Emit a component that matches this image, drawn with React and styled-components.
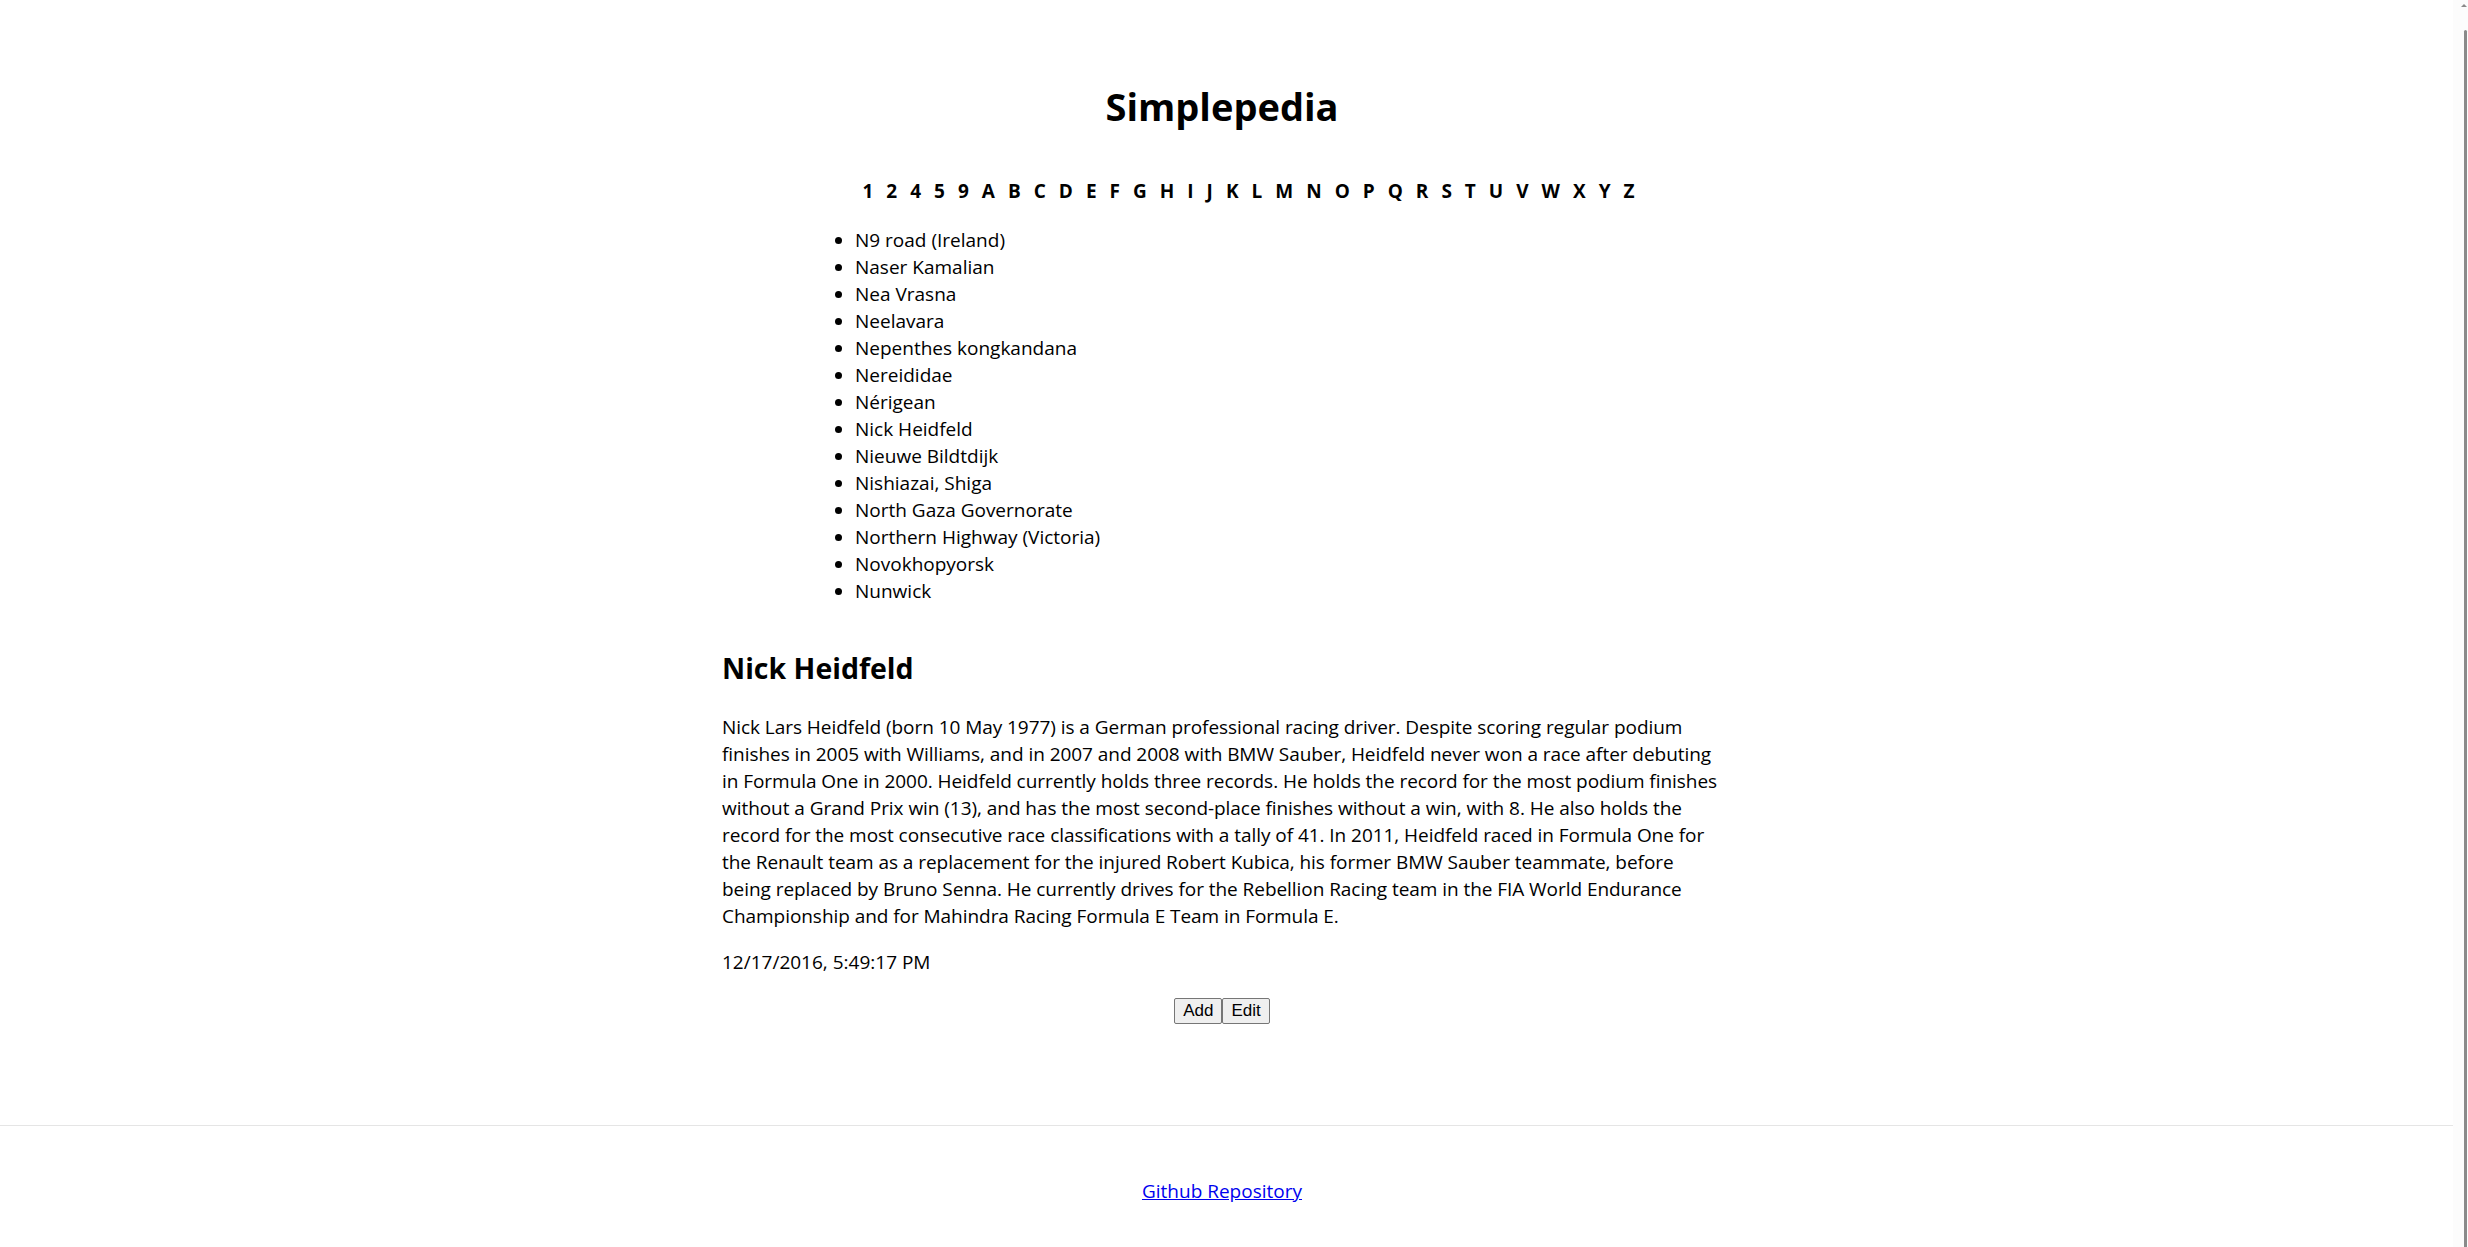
import React from 'react'
import styled, { createGlobalStyle } from 'styled-components'

const GlobalStyle = createGlobalStyle`
  body {
    margin: 0;
    font-family: 'Open Sans', 'Noto Sans', sans-serif;
    font-size: 19px;
    color: #000;
    background: #fff;
  }
`

const letters = '1 2 4 5 9 A B C D E F G H I J K L M N O P Q R S T U V W X Y Z'.split(' ')

const titles = [
  'N9 road (Ireland)',
  'Naser Kamalian',
  'Nea Vrasna',
  'Neelavara',
  'Nepenthes kongkandana',
  'Nereididae',
  'Nérigean',
  'Nick Heidfeld',
  'Nieuwe Bildtdijk',
  'Nishiazai, Shiga',
  'North Gaza Governorate',
  'Northern Highway (Victoria)',
  'Novokhopyorsk',
  'Nunwick',
]

const extract =
  'Nick Lars Heidfeld (born 10 May 1977) is a German professional racing driver. Despite scoring regular podium finishes in 2005 with Williams, and in 2007 and 2008 with BMW Sauber, Heidfeld never won a race after debuting in Formula One in 2000. Heidfeld currently holds three records. He holds the record for the most podium finishes without a Grand Prix win (13), and has the most second-place finishes without a win, with 8. He also holds the record for the most consecutive race classifications with a tally of 41. In 2011, Heidfeld raced in Formula One for the Renault team as a replacement for the injured Robert Kubica, his former BMW Sauber teammate, before being replaced by Bruno Senna. He currently drives for the Rebellion Racing team in the FIA World Endurance Championship and for Mahindra Racing Formula E Team in Formula E.'

// window frame: page column + the thin scrollbar on the right
const Frame = styled.div`
  display: flex;
  min-height: 100vh;
`

const Page = styled.div`
  flex: 1;
  display: flex;
  flex-direction: column;
  padding-right: 9px;
`

const Main = styled.main`
  width: 1000px;
  margin: 0 auto;
  display: flex;
  flex-direction: column;
`

const Title = styled.h1`
  margin: 79px 0 0;
  font-size: 38px;
  line-height: 54px;
  font-weight: 700;
  text-align: center;
`

const IndexBar = styled.nav`
  display: flex;
  justify-content: center;
  gap: 13px;
  margin-top: 45px;
  padding-left: 53px;
  font-weight: 700;
  line-height: 27px;
`

const Letter = styled.span`
  cursor: pointer;
`

const TitleList = styled.ul`
  margin: 22px 0 0 93px;
  padding-left: 40px;
  line-height: 27px;
`

const Heading = styled.h2`
  margin: 43px 0 0;
  font-size: 28.5px;
  line-height: 40px;
  font-weight: 700;
`

const Extract = styled.p`
  margin: 26px 0 0;
  line-height: 27px;
  letter-spacing: -0.05px;
`

const Stamp = styled.p`
  margin: 19px 0 0;
  line-height: 27px;
`

const ButtonBar = styled.div`
  display: flex;
  justify-content: center;
  margin-top: 22px;
`

const Button = styled.button`
  font-family: 'Liberation Sans', Arial, sans-serif;
  font-size: 17px;
  padding: 1px 8px;
  height: 26px;
  color: #000;
  background: #efefef;
  border: 1px solid #767676;
  border-radius: 2px;
`

const Footer = styled.footer`
  margin-top: 101px;
  margin-right: -9px;
  padding: 52px 9px 60px 0;
  border-top: 1px solid #e5e5e5;
  text-align: center;
  line-height: 27px;
`

const RepoLink = styled.a`
  color: #0000ee;
`

const ScrollTrack = styled.div`
  position: relative;
  width: 15px;
  flex-shrink: 0;
  background: #fcfcfc;
`

const ScrollThumb = styled.div`
  position: absolute;
  top: 30px;
  bottom: 14px;
  right: 1px;
  width: 3px;
  border-radius: 2px;
  background: #8a8a8a;
`

const ScrollArrow = styled.div`
  position: absolute;
  right: 1px;
  ${(p) => (p.$down ? 'bottom: 4px;' : 'top: 4px;')}
  width: 0;
  height: 0;
  border-left: 3px solid transparent;
  border-right: 3px solid transparent;
  ${(p) => (p.$down ? 'border-top: 3px solid #8a8a8a;' : 'border-bottom: 3px solid #8a8a8a;')}
`

export default function App() {
  return (
    <Frame>
      <GlobalStyle />
      <Page>
        <Main>
          <Title>Simplepedia</Title>
          <IndexBar>
            {letters.map((l) => (
              <Letter key={l}>{l}</Letter>
            ))}
          </IndexBar>
          <TitleList>
            {titles.map((t) => (
              <li key={t}>{t}</li>
            ))}
          </TitleList>
          <Heading>Nick Heidfeld</Heading>
          <Extract>{extract}</Extract>
          <Stamp>12/17/2016, 5:49:17 PM</Stamp>
          <ButtonBar>
            <Button>Add</Button>
            <Button>Edit</Button>
          </ButtonBar>
        </Main>
        <Footer>
          <RepoLink href='#'>Github Repository</RepoLink>
        </Footer>
      </Page>
      <ScrollTrack>
        <ScrollArrow />
        <ScrollThumb />
        <ScrollArrow $down />
      </ScrollTrack>
    </Frame>
  )
}
